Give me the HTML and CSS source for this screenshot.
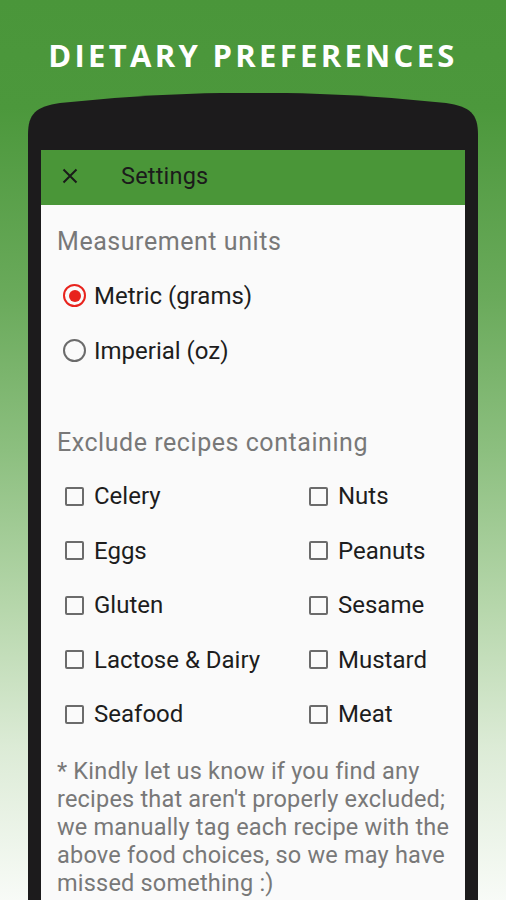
FILE: index.html
```html
<!DOCTYPE html>
<html>
<head>
<meta charset="utf-8">
<link rel="stylesheet" href="styles.css">
</head>
<body>
<div class="page">
  <h1 class="title">DIETARY PREFERENCES</h1>
  <div class="phone">
    <div class="screen">
      <div class="toolbar">
        <svg class="close" width="16" height="16" viewBox="0 0 16 16"><path d="M1.5 1.5 L14.5 14.5 M14.5 1.5 L1.5 14.5" stroke="#1a1a1a" stroke-width="2" fill="none"/></svg>
        <span class="toolbar-title">Settings</span>
      </div>
      <div class="content">
        <div class="heading">Measurement units</div>
        <div class="radio-row"><span class="radio checked"></span><span class="label">Metric (grams)</span></div>
        <div class="radio-row"><span class="radio"></span><span class="label">Imperial (oz)</span></div>
        <div class="heading heading-2">Exclude recipes containing</div>
        <div class="grid">
          <div class="check-row"><span class="box"></span><span class="label">Celery</span></div>
          <div class="check-row"><span class="box"></span><span class="label">Nuts</span></div>
          <div class="check-row"><span class="box"></span><span class="label">Eggs</span></div>
          <div class="check-row"><span class="box"></span><span class="label">Peanuts</span></div>
          <div class="check-row"><span class="box"></span><span class="label">Gluten</span></div>
          <div class="check-row"><span class="box"></span><span class="label">Sesame</span></div>
          <div class="check-row"><span class="box"></span><span class="label">Lactose &amp; Dairy</span></div>
          <div class="check-row"><span class="box"></span><span class="label">Mustard</span></div>
          <div class="check-row"><span class="box"></span><span class="label">Seafood</span></div>
          <div class="check-row"><span class="box"></span><span class="label">Meat</span></div>
        </div>
        <p class="note">* Kindly let us know if you find any recipes that aren't properly excluded; we manually tag each recipe with the above food choices, so we may have missed something :)</p>
      </div>
    </div>
  </div>
</div>
</body>
</html>
```

FILE: styles.css
```css
html, body {
  margin: 0;
  padding: 0;
}
body {
  width: 506px;
  height: 900px;
  overflow: hidden;
  font-family: Roboto, "Liberation Sans", sans-serif;
}
.page {
  height: 900px;
  background: linear-gradient(180deg, #4a963a 0%, #4c983c 12%, #6aaa5b 33%, #8cbf7f 50%, #b5d6aa 67%, #dcebd6 83%, #f8fbf7 100%);
  display: flex;
  flex-direction: column;
  align-items: flex-start;
  overflow: hidden;
}
.title {
  margin: 37px 0 0 0;
  align-self: center;
  height: 36px;
  line-height: 36px;
  font-family: "Open Sans", "DejaVu Sans", sans-serif;
  font-weight: 700;
  font-size: 31px;
  letter-spacing: 3.3px;
  color: #ffffff;
  white-space: nowrap;
}
.phone {
  margin-top: 20px;
  margin-left: 28px;
  width: 450px;
  height: 820px;
  background: #1c1b1c;
  box-sizing: border-box;
  padding: 57px 13px 0 13px;
  clip-path: path("M0 42 C0 20 8 14 32 10 Q225 -11 418 10 C442 14 450 20 450 42 L450 820 L0 820 Z");
}
.screen {
  background: #fafafa;
  height: 100%;
}
.toolbar {
  height: 55px;
  background: #4a9638;
  display: flex;
  align-items: center;
}
.close {
  margin-left: 21px;
  margin-top: -3px;
  display: block;
}
.toolbar-title {
  margin-left: 43px;
  margin-top: -4px;
  font-size: 23.5px;
  letter-spacing: 0.2px;
  color: #1b1b1b;
  font-weight: 400;
}
.content {
  padding: 21px 16px 0 16px;
}
.heading {
  height: 32px;
  line-height: 32px;
  font-size: 25px;
  letter-spacing: 0.55px;
  color: #787878;
  margin-bottom: 10px;
}
.heading-2 {
  margin-top: 49px;
}
.radio-row, .check-row {
  display: flex;
  align-items: center;
}
.radio-row {
  height: 55px;
}
.check-row {
  height: 54.5px;
}
.label {
  font-size: 24px;
  color: #1d1d1d;
}
.radio {
  width: 23px;
  height: 23px;
  box-sizing: border-box;
  border: 2px solid #6b6b6b;
  border-radius: 50%;
  margin-left: 6px;
  margin-right: 8px;
  position: relative;
  flex: none;
}
.radio.checked {
  border-color: #e8231d;
}
.radio.checked::after {
  content: "";
  position: absolute;
  left: 3.5px;
  top: 3.5px;
  width: 12px;
  height: 12px;
  border-radius: 50%;
  background: #e8231d;
}
.grid {
  display: grid;
  grid-template-columns: 244px 1fr;
}
.box {
  width: 19px;
  height: 19px;
  box-sizing: border-box;
  border: 2px solid #6b6b6b;
  border-radius: 2px;
  margin-left: 8px;
  margin-right: 10px;
  flex: none;
}
.note {
  margin: 15px -10px 0 0;
  font-size: 23.5px;
  line-height: 28px;
  letter-spacing: 0.2px;
  color: #787878;
}
```
